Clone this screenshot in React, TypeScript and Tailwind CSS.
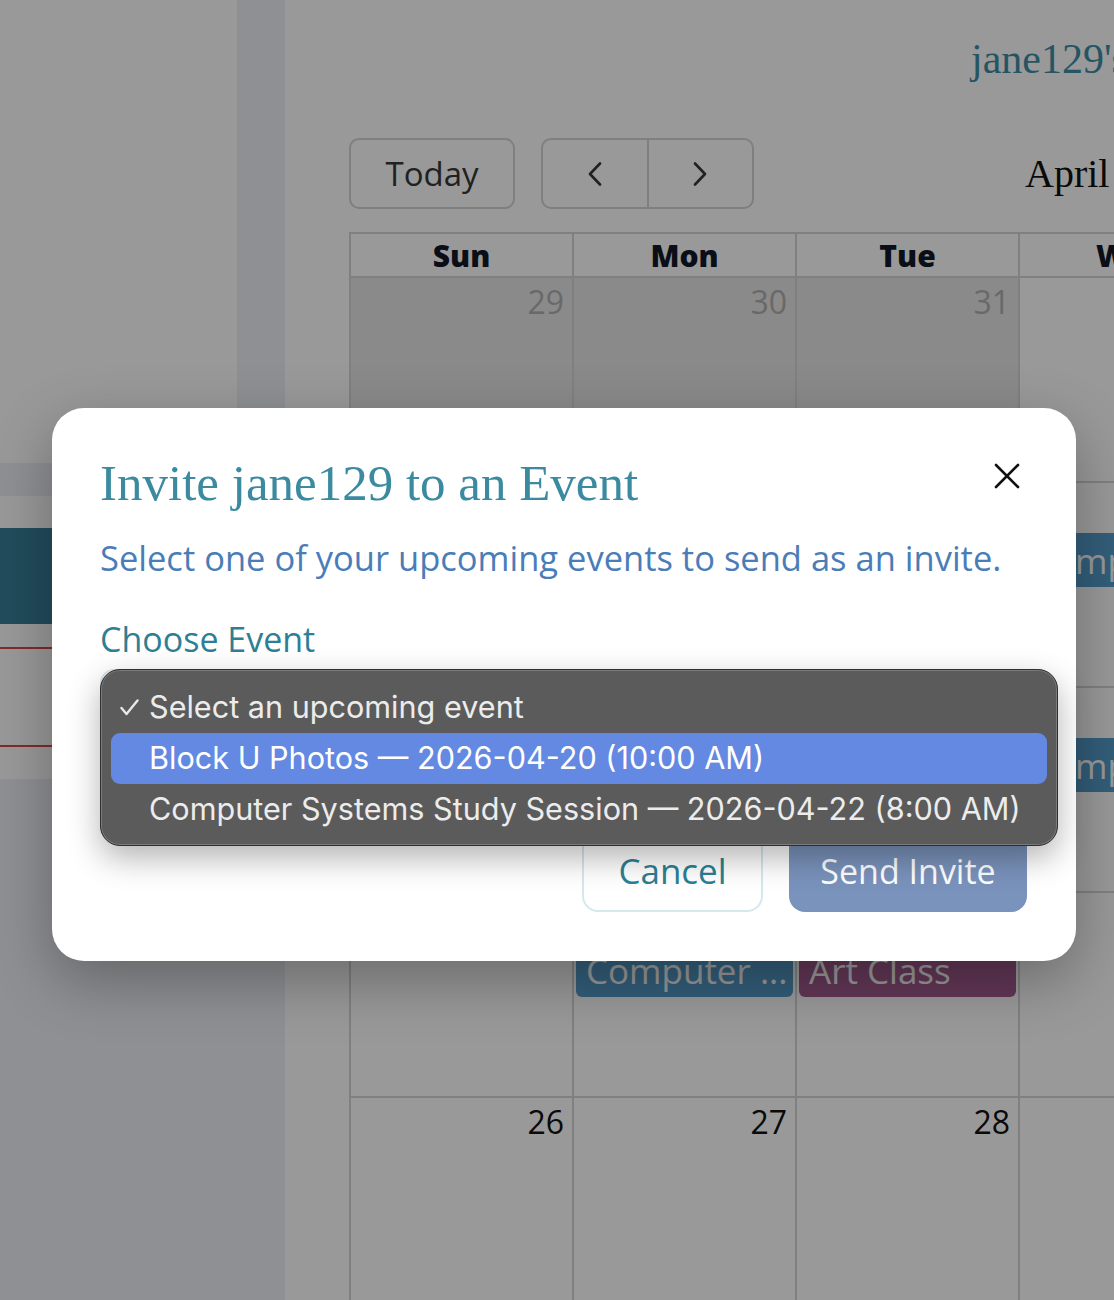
import { useState } from 'react'

type Chip = { label: string; color: string }
type Day = { n: number; muted?: boolean; events?: Chip[] }

const weekdays = ['Sun', 'Mon', 'Tue', 'Wed', 'Thu', 'Fri', 'Sat']

const blue = 'bg-[#569dcc]'
const plum = 'bg-[#a55d91]'

// abril 2026, la grilla arranca el domingo 29 de marzo
const weeks: Day[][] = [
  [{ n: 29, muted: true }, { n: 30, muted: true }, { n: 31, muted: true }, { n: 1 }, { n: 2 }, { n: 3 }, { n: 4 }],
  [{ n: 5 }, { n: 6 }, { n: 7 }, { n: 8, events: [{ label: 'Computer ...', color: blue }] }, { n: 9 }, { n: 10 }, { n: 11 }],
  [{ n: 12 }, { n: 13 }, { n: 14 }, { n: 15, events: [{ label: 'Computer ...', color: blue }] }, { n: 16 }, { n: 17 }, { n: 18 }],
  [
    { n: 19 },
    { n: 20, events: [{ label: 'Computer ...', color: blue }] },
    { n: 21, events: [{ label: 'Art Class', color: plum }] },
    { n: 22 }, { n: 23 }, { n: 24 }, { n: 25 },
  ],
  [{ n: 26 }, { n: 27 }, { n: 28 }, { n: 29 }, { n: 30 }, { n: 1, muted: true }, { n: 2, muted: true }],
]

const events = [
  'Block U Photos — 2026-04-20 (10:00 AM)',
  'Computer Systems Study Session — 2026-04-22 (8:00 AM)',
]

const sans = "font-['Open_Sans',sans-serif]"
const serif = "font-['Liberation_Serif',serif]"

function Calendar() {
  return (
    <div className="w-[1563px]">
      <h1 className={`${serif} text-center text-[42px] leading-none text-[#3f8ea6] pt-[38px]`}>
        jane129's Calendar
      </h1>

      <div className="flex items-center mt-[58px]">
        <button className={`${sans} w-[166px] h-[71px] border-2 border-[#d4d4d4] rounded-[10px] text-[33px] text-[#383838]`}>
          Today
        </button>
        <div className="ml-[26px] flex h-[71px] w-[213px] border-2 border-[#d4d4d4] rounded-[10px]">
          <span className="flex-1 flex items-center justify-center border-r-2 border-[#d4d4d4]">
            <svg width="14" height="24" viewBox="0 0 14 24" fill="none" stroke="#383838" strokeWidth="2.6" strokeLinecap="round" strokeLinejoin="round">
              <polyline points="12,1.5 2,12 12,22.5" />
            </svg>
          </span>
          <span className="flex-1 flex items-center justify-center">
            <svg width="14" height="24" viewBox="0 0 14 24" fill="none" stroke="#383838" strokeWidth="2.6" strokeLinecap="round" strokeLinejoin="round">
              <polyline points="2,1.5 12,12 2,22.5" />
            </svg>
          </span>
        </div>
        <h2 className={`${serif} ml-[271px] text-[40px] leading-none text-[#111]`}>April 2026</h2>
      </div>

      <div className="mt-[23px] border-l-2 border-t-2 border-[#d5d5d5]">
        <div className="grid grid-cols-[repeat(7,223px)]">
          {weekdays.map(d => (
            <div key={d} className={`${sans} h-[44px] flex items-center justify-center border-r-2 border-b-2 border-[#d5d5d5] text-[30px] font-extrabold text-[#111827]`}>
              {d}
            </div>
          ))}
        </div>
        {weeks.map((week, wi) => (
          <div key={wi} className="grid grid-cols-[repeat(7,223px)]">
            {week.map((day, di) => (
              <div key={di}
                className={`h-[205px] border-r-2 border-b-2 border-[#d5d5d5] ${day.muted ? 'bg-[#e6e6e6]' : 'bg-white'}`}>
                <div className={`${sans} text-right text-[32px] leading-none pt-[8px] pr-[8px] ${day.muted ? 'text-[#b0b0b0]' : 'text-[#111]'}`}>
                  {day.n}
                </div>
                {day.events?.map((ev, i) => (
                  <div key={i} className={`${ev.color} ${sans} mt-[10px] mx-[2px] h-[54px] rounded-[6px] flex items-center pl-[10px] text-[35px] leading-none text-white whitespace-nowrap overflow-hidden`}>
                    {ev.label}
                  </div>
                ))}
              </div>
            ))}
          </div>
        ))}
      </div>
    </div>
  )
}

function Check() {
  return (
    <svg width="19" height="17" viewBox="0 0 19 17" fill="none" stroke="#e8e8e8" strokeWidth="2.4" strokeLinecap="round" strokeLinejoin="round">
      <polyline points="1.5,9 6.5,15 17.5,1.5" />
    </svg>
  )
}

function InviteModal() {
  const [selected] = useState(0)

  return (
    <div className="w-[1024px] rounded-[32px] bg-white pl-12 pr-[49px] pt-[50px] pb-[49px] shadow-[0_20px_60px_rgba(0,0,0,0.3)]">
      <div className="flex items-start justify-between">
        <h2 className={`${serif} text-[51px] leading-none text-[#3b8aa0]`}>Invite jane129 to an Event</h2>
        <button className="mt-[5px] mr-[7px]" aria-label="Close">
          <svg width="26" height="26" viewBox="0 0 26 26" stroke="#111" strokeWidth="2.6" strokeLinecap="round">
            <line x1="2" y1="2" x2="24" y2="24" />
            <line x1="24" y1="2" x2="2" y2="24" />
          </svg>
        </button>
      </div>

      <p className={`${sans} mt-[32px] text-[34.5px] leading-none text-[#4a7db7]`}>
        Select one of your upcoming events to send as an invite.
      </p>

      <label className={`${sans} block mt-[46px] text-[34px] leading-none text-[#2e7f95]`}>Choose Event</label>

      <div className="relative mt-[13px] h-[68px]">
        <div className="h-full w-[920px] rounded-[14px] border-2 border-[#d7e7ee]" />

        {/* menú nativo abierto sobre el select */}
        <div className="absolute left-0 top-0 z-10 w-[958px] h-[177px] pt-[12px] rounded-[20px] bg-[#5b5b5b] border border-[#2f2f2f] shadow-[inset_0_0_0_1px_rgba(255,255,255,0.2),0_12px_32px_rgba(0,0,0,0.3)] font-['Inter',sans-serif]">
          <div className="mx-[10px] h-[51px] flex items-center rounded-[9px] text-[30.6px] text-[#ececec]">
            <span className="w-[38px] pl-[9px] flex items-center"><Check /></span>
            Select an upcoming event
          </div>
          {events.map((ev, i) => (
            <div key={ev}
              className={`mx-[10px] h-[51px] flex items-center rounded-[9px] text-[30.6px] ${i === selected ? 'bg-[#6389e2] text-white' : 'text-[#ececec]'}`}>
              <span className="w-[38px]" />
              {ev}
            </div>
          ))}
        </div>
      </div>

      <div className="mt-[95px] flex justify-end gap-[26px]">
        <button className={`${sans} w-[181px] h-[80px] rounded-[16px] border-2 border-[#d7e7ee] bg-white text-[35px] text-[#2c7f94]`}>
          Cancel
        </button>
        <button className={`${sans} w-[238px] h-[80px] rounded-[16px] bg-[#7a93bc] text-[34px] text-white`}>
          Send Invite
        </button>
      </div>
    </div>
  )
}

export default function App() {
  return (
    <div className="relative h-[1300px] overflow-hidden bg-[#eef0f6]">
      <div className="flex h-full">
        <aside className="w-[237px] shrink-0 flex flex-col gap-[33px]">
          <div className="h-[463px] bg-white" />
          <div className="bg-white pt-[32px] pb-[32px]">
            <div className="h-[96px] bg-[#3a7f99]" />
            <div className="h-[25px] border-b-2 border-[#d64848]" />
            <div className="h-[98px] border-b-2 border-[#d64848]" />
          </div>
        </aside>
        <main className="ml-12 shrink-0 bg-white pl-[64px]">
          <Calendar />
        </main>
      </div>

      <div className="absolute inset-0 bg-black/40 pl-[52px] pt-[408px]">
        <InviteModal />
      </div>
    </div>
  )
}
